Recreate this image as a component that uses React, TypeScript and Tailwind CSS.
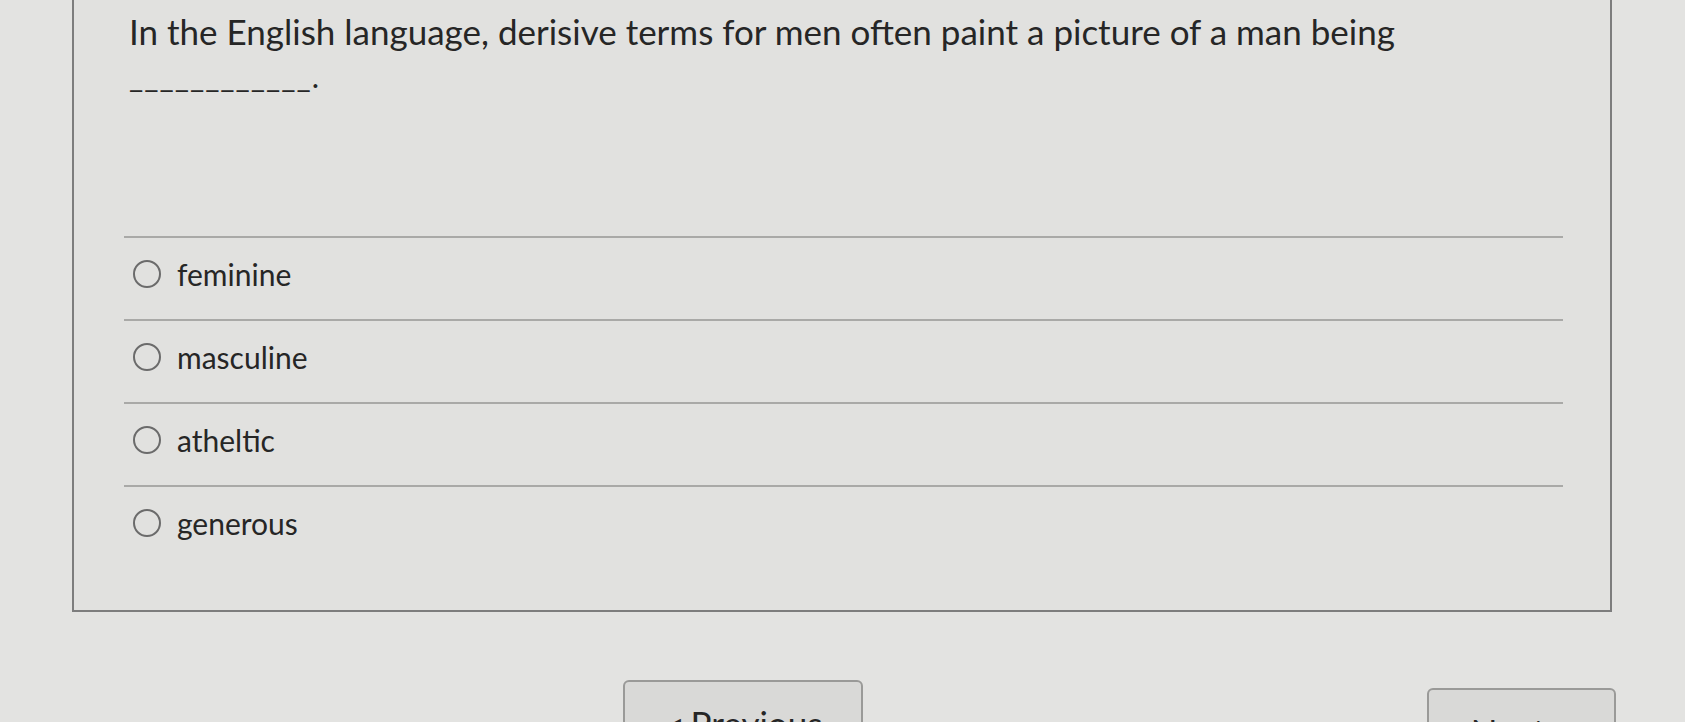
import { useState } from "react"

const options = ["feminine", "masculine", "atheltic", "generous"]

function Radio({ checked }: { checked: boolean }) {
  return (
    <span className="flex h-[28px] w-[28px] shrink-0 items-center justify-center rounded-full border-2 border-[#6b6b6b]">
      {checked && <span className="h-[14px] w-[14px] rounded-full bg-[#333]" />}
    </span>
  )
}

export default function App() {
  const [picked, setPicked] = useState<string | null>(null)

  return (
    <div
      className="h-[722px] w-full overflow-hidden bg-[#e3e3e1] text-[#262626]"
      style={{ fontFamily: "Lato, 'Open Sans', sans-serif" }}>
      <div className="ml-[72px] w-[1540px] border-2 border-t-0 border-[#7d7d7d] bg-[#e1e1df] pb-[42px]">
        <div className="pl-[55px] pr-[40px] pt-[9px] text-[35px] leading-[45px]">
          <div>In the English language, derisive terms for men often paint a picture of a man being</div>
          <div className="text-[31px] tracking-[1px]">____________.</div>
        </div>

        <div className="mt-[137px] pl-[50px] pr-[47px]">
          {options.map((o) => (
            <label
              key={o}
              className="flex h-[83px] cursor-pointer items-center gap-[16px] border-t-2 border-[#a9a9a7] pb-[10px] pl-[9px]"
              onClick={() => setPicked(o)}>
              <Radio checked={picked === o} />
              <span className="text-[30px] leading-[36px]">{o}</span>
            </label>
          ))}
        </div>
      </div>

      <div className="ml-[72px] mt-[68px] flex w-[1544px] justify-between pl-[551px]">
        <button className="flex h-[80px] w-[240px] items-start justify-center gap-[10px] rounded-[6px] border-2 border-[#9a9a98] bg-[#d9d9d7] pt-[20px] text-[35px] leading-[42px] text-[#262626]">
          <span className="mt-[12px] text-[22px] leading-[22px]">◀</span>
          Previous
        </button>
        <button className="mt-[8px] flex h-[80px] w-[189px] items-start justify-center gap-[10px] rounded-[6px] border-2 border-[#9a9a98] bg-[#d9d9d7] pt-[20px] text-[35px] leading-[42px] text-[#262626]">
          Next
          <span className="mt-[12px] text-[22px] leading-[22px]">▶</span>
        </button>
      </div>
    </div>
  )
}
